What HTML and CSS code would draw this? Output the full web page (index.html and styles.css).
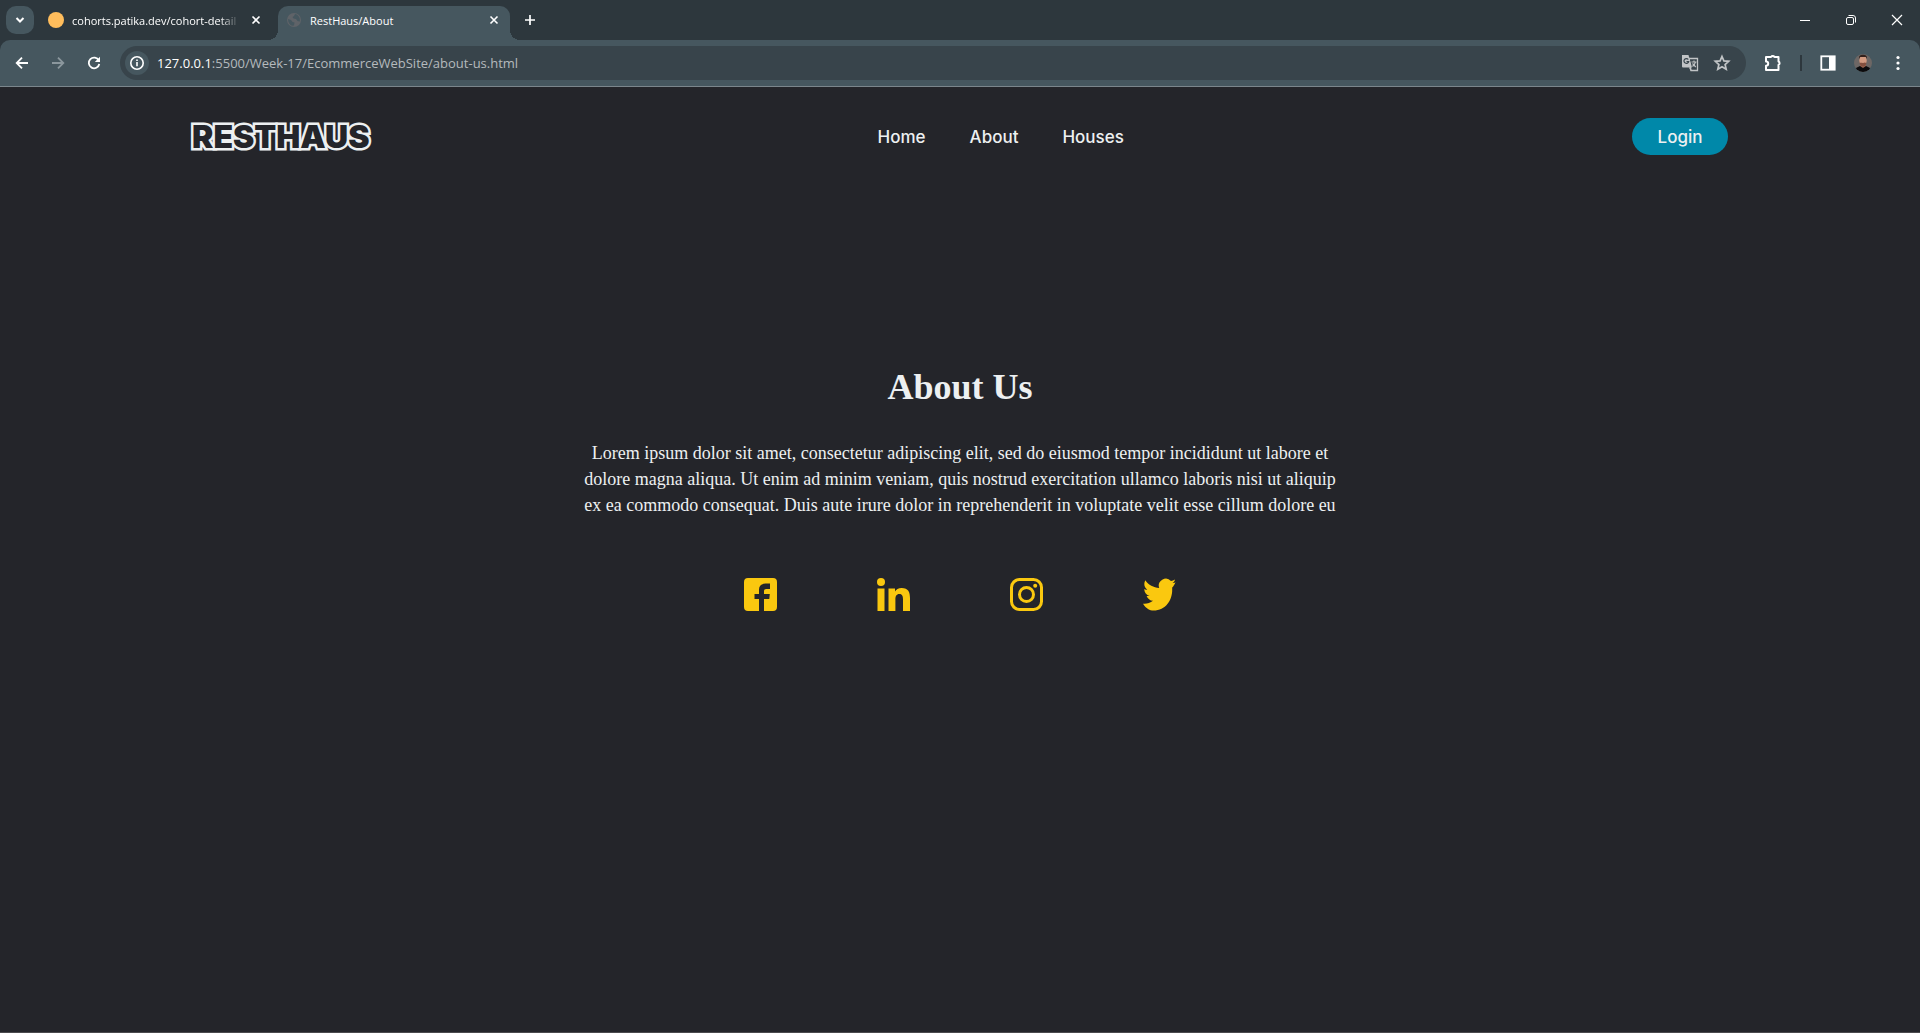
FILE: index.html
```html
<!DOCTYPE html>
<html lang="en">
<head>
<meta charset="utf-8">
<meta name="viewport" content="width=device-width, initial-scale=1">
<title>RestHaus/About</title>
<link rel="stylesheet" href="styles.css">
</head>
<body>
<div class="browser">
  <div class="tab-strip">
    <button class="tab-search" aria-label="Search tabs"><svg width="28" height="28" viewBox="0 0 28 28"><path d="M10.5 12l3.5 3.5 3.5-3.5" fill="none" stroke="#fff" stroke-width="2"/></svg></button>
    <div class="tab">
      <svg width="16" height="16" viewBox="0 0 16 16"><circle cx="8" cy="8" r="8" fill="#ffbd5c"/></svg>
      <span class="tab-title fade">cohorts.patika.dev/cohort-detail</span>
      <button class="icon-button" aria-label="Close tab"><svg width="16" height="16" viewBox="0 0 16 16"><path d="M4.500 4.500l7 7m0-7l-7 7" stroke="#fff" stroke-width="1.600"/></svg></button>
    </div>
    <div class="tab active">
      <svg width="16" height="16" viewBox="0 0 16 16"><circle cx="8" cy="8" r="7" fill="#5f6368"/><path d="M2 7l3 1 1.500 2 2 .5-.5 3-2 .3C3.500 13 2 10 2 7zM9 2L8 4 6.500 5l1 1.500L10 7l1.500 2 2.300.500C14.500 6 12.500 2.500 9 2z" fill="#46575f"/></svg>
      <span class="tab-title">RestHaus/About</span>
      <button class="icon-button" aria-label="Close tab"><svg width="16" height="16" viewBox="0 0 16 16"><path d="M4.500 4.500l7 7m0-7l-7 7" stroke="#fff" stroke-width="1.600"/></svg></button>
    </div>
    <button class="icon-button new-tab" aria-label="New tab"><svg width="16" height="16" viewBox="0 0 16 16"><path d="M8 3v10M3 8h10" stroke="#fff" stroke-width="1.700"/></svg></button>
    <div class="window-controls">
      <button class="icon-button" aria-label="Minimize"><svg width="12" height="12" viewBox="0 0 12 12"><path d="M1 6.500h10" stroke="#fff"/></svg></button>
      <button class="icon-button" aria-label="Restore"><svg width="12" height="12" viewBox="0 0 12 12" fill="none" stroke="#fff"><rect x="1.500" y="3.500" width="7" height="7" rx="1.500"/><path d="M3.500 1.500H8a2.500 2.500 0 0 1 2.500 2.500v4.500"/></svg></button>
      <button class="icon-button" aria-label="Close"><svg width="12" height="12" viewBox="0 0 12 12"><path d="M1 1l10 10m0-10L1 11" stroke="#fff" stroke-width="1.200"/></svg></button>
    </div>
  </div>
  <div class="toolbar">
    <div class="history">
      <button class="icon-button" aria-label="Back"><svg width="16" height="16" viewBox="0 0 16 16" fill="none" stroke="#fff" stroke-width="1.800"><path d="M14 8H3M8 2.700L2.700 8 8 13.300"/></svg></button>
      <button class="icon-button" aria-label="Forward"><svg width="16" height="16" viewBox="0 0 16 16" fill="none" stroke="#8b979d" stroke-width="1.800"><path d="M2 8h11M8 2.700L13.300 8 8 13.300"/></svg></button>
      <button class="icon-button" aria-label="Reload"><svg width="16" height="16" viewBox="0 0 16 16"><path d="M12.800 5.500A5.300 5.300 0 1 0 13.300 9" fill="none" stroke="#fff" stroke-width="1.800"/><path d="M14 1.800V7H8.800z" fill="#fff"/></svg></button>
    </div>
    <div class="address">
      <button class="site-info" aria-label="Site information"><svg width="16" height="16" viewBox="0 0 16 16"><circle cx="8" cy="8" r="6.200" fill="none" stroke="#fff" stroke-width="1.600"/><path d="M7.200 7h1.600v4.200H7.200zM7.200 4.600h1.600v1.500H7.200z" fill="#fff"/></svg></button>
      <label class="host" for="url">127.0.0.1</label><input class="url" id="url" type="text" value=":5500/Week-17/EcommerceWebSite/about-us.html">
      <button class="icon-button" aria-label="Translate"><svg width="18" height="18" viewBox="0 0 18 18"><path d="M8 4.500h8.500v12H10z" fill="none" stroke="#c1c4c6" stroke-width="1.300"/><path d="M1 1h6.500l3.500 12.500H2a1 1 0 0 1-1-1z" fill="#c1c4c6"/><path d="M7.300 5.500A2.400 2.400 0 1 0 7.700 7.500H5.500" fill="none" stroke="#38444b" stroke-width="1.200"/><path d="M10.500 8h5M13 6.500V8M14.500 8c-.5 2-1.500 3-3 4.500M11.500 9.500l3.300 3.500M8.500 13.500L10 16.500" fill="none" stroke="#c1c4c6" stroke-width="1.100"/></svg></button>
      <button class="icon-button" aria-label="Bookmark"><svg width="18" height="18" viewBox="0 0 18 18"><path d="M9 2.500l1.900 4.400 4.800.4-3.600 3.200 1.100 4.700L9 12.700l-4.200 2.500 1.100-4.700-3.600-3.200 4.800-.4z" fill="none" stroke="#c1c4c6" stroke-width="1.700"/></svg></button>
    </div>
    <div class="actions">
      <button class="icon-button" aria-label="Extensions"><svg width="18" height="18" viewBox="0 0 18 18"><path d="M2 3h5a2 1.800 0 0 1 3.500 0h4V7.500a1.800 1.800 0 0 1 0 3.300V16H2v-4.200a2.200 2.200 0 0 0 0-4.400z" fill="none" stroke="#fff" stroke-width="2" stroke-linejoin="round"/></svg></button>
      <span class="divider"></span>
      <button class="icon-button" aria-label="Side panel"><svg width="16" height="16" viewBox="0 0 16 16"><rect x="1.300" y="1.300" width="13.400" height="13.400" fill="none" stroke="#fff" stroke-width="1.800"/><path d="M9 1h6v14H9z" fill="#fff"/></svg></button>
      <button class="icon-button" aria-label="Profile"><svg width="18" height="18" viewBox="0 0 18 18"><defs><clipPath id="face"><circle cx="9" cy="9" r="9"/></clipPath></defs><g clip-path="url(#face)"><path d="M0 0h18v18H0z" fill="#6d6765"/><path d="M0 18v-3l6-3h6l6 3v3z" fill="#0b0b0d"/><path d="M6 9h6v3l-3 2-3-2z" fill="#9c6550"/><ellipse cx="9" cy="6.500" rx="3.700" ry="5" fill="#d39a80"/><path d="M5 5C4.500 2 6.500.800 9 .800S13.500 2 13 5l-1-2H6z" fill="#33211c"/><path d="M5.500 8.500c1.500.5 5.500.5 7 0-.3 2.500-1.800 4-3.500 4s-3.200-1.500-3.500-4z" fill="#84503f"/></g></svg></button>
      <button class="icon-button" aria-label="Menu"><svg width="16" height="16" viewBox="0 0 16 16" fill="#fff"><circle cx="8" cy="2.500" r="1.600"/><circle cx="8" cy="8" r="1.600"/><circle cx="8" cy="13.500" r="1.600"/></svg></button>
    </div>
  </div>
</div>
<header class="site-header">
  <a class="logo" href="#">RESTHAUS</a>
  <nav class="site-nav">
    <a href="#">Home</a>
    <a href="#">About</a>
    <a href="#">Houses</a>
  </nav>
  <button class="login">Login</button>
</header>
<main class="about">
  <h1>About Us</h1>
  <p>Lorem ipsum dolor sit amet, consectetur adipiscing elit, sed do eiusmod tempor incididunt ut labore et dolore magna aliqua. Ut enim ad minim veniam, quis nostrud exercitation ullamco laboris nisi ut aliquip ex ea commodo consequat. Duis aute irure dolor in reprehenderit in voluptate velit esse cillum dolore eu</p>
  <div class="social">
    <a href="#" aria-label="Facebook"><svg viewBox="0 0 33 33"><path d="M4 0h25a4 4 0 0 1 4 4v25a4 4 0 0 1-4 4h-9V21h5.300l.5-5H20v-2.500c0-1.800.8-2.500 2.300-2.500H26V5.600h-4.500c-4.500 0-6.500 2.400-6.500 6V16h-4.500v5H15v12H4a4 4 0 0 1-4-4V4a4 4 0 0 1 4-4z"/></svg></a>
    <a href="#" aria-label="LinkedIn"><svg viewBox="0 0 33 33"><circle cx="4" cy="4" r="4"/><path d="M.5 10.500h7V33h-7zM11.500 10.500H18v3c1-2 3.300-3.600 6.700-3.600 6.700 0 8.300 4.200 8.300 10V33h-7V21.500c0-2.800-.5-5.500-3.600-5.500s-4 2.400-4 5.400V33h-6.900z"/></svg></a>
    <a href="#" aria-label="Instagram"><svg viewBox="0 0 33 33"><rect x="1.500" y="1.500" width="30" height="30" rx="8" fill="none" stroke="currentColor" stroke-width="3"/><circle cx="16.500" cy="16.500" r="7" fill="none" stroke="currentColor" stroke-width="3"/><circle cx="25.200" cy="7.800" r="2"/></svg></a>
    <a href="#" aria-label="Twitter"><svg viewBox="0 0 33 33"><path d="M32.500 4.200c-1 .6-2 .8-3 .9 1.500-.9 2-1.900 2.500-3.600-1.300.7-2.700 1.200-4 1.500A7 7 0 0 0 16.200 10C10.500 9.700 5.600 7 2.300 2.300c-2 3.700-.8 7.300 2 9.500-1 0-2-.3-3-.9 0 3.500 2.300 6.200 5.300 7-1 .2-2 .2-3 .1.900 2.700 3.400 4.700 6.400 4.800-3 2.400-6.300 3.200-10 2.900 3.200 4.900 6.700 6.900 10.500 6.900C22.800 32.600 29.200 22 29.200 12V9.500c1.400-1.200 2.500-3.500 3.300-5.300z"/></svg></a>
  </div>
</main>
</body>
</html>
```
FILE: styles.css
```css
* {
  box-sizing: border-box;
}

body {
  margin: 0;
  min-height: 100vh;
  display: flex;
  flex-direction: column;
  background: #24252a;
  border-bottom: 1px solid #4b4a4e;
  color: #edf0f1;
  font-family: "Liberation Serif", serif;
}

button {
  border: 0;
  padding: 0;
  background: none;
  cursor: pointer;
}

svg {
  display: block;
  flex: none;
}

.browser {
  background: #2d373d;
  font-family: "Open Sans", sans-serif;
  border-bottom: 1px solid #7b868c;
}

.tab-strip {
  display: flex;
  height: 40px;
  padding-left: 6px;
}

.tab-search {
  width: 28px;
  height: 28px;
  margin: 6px 6px 0 0;
  border-radius: 10px;
  background: #46575f;
}

.icon-button {
  display: flex;
  align-items: center;
  justify-content: center;
}

.tab {
  position: relative;
  display: flex;
  align-items: center;
  gap: 8px;
  width: 232px;
  height: 34px;
  margin-top: 6px;
  padding: 0 8px 6px;
  color: #fff;
  font-size: 11px;
}

.tab:not(.active) {
  width: 238px;
  padding-right: 14px;
}

.active {
  background: #46575f;
  border-radius: 10px 10px 0 0;
}

.active::before,
.active::after {
  content: "";
  position: absolute;
  bottom: 0;
  width: 10px;
  height: 10px;
}

.active::before {
  right: 100%;
  background: radial-gradient(circle at 0 0, #2d373d 10px, #46575f 10px);
}

.active::after {
  left: 100%;
  background: radial-gradient(circle at 100% 0, #2d373d 10px, #46575f 10px);
}

.tab-title {
  flex: 1;
  min-width: 0;
  overflow: hidden;
  white-space: nowrap;
}

.fade {
  mask-image: linear-gradient(to right, #000 88%, transparent);
}

.new-tab {
  width: 28px;
  margin-left: 6px;
}

.window-controls {
  display: flex;
  margin-left: auto;
}

.window-controls .icon-button {
  width: 46px;
}

.toolbar {
  display: flex;
  align-items: center;
  height: 46px;
  background: #46575f;
  border-radius: 10px 10px 0 0;
}

.history {
  display: flex;
  gap: 20px;
  padding: 0 18px 0 14px;
}

.address {
  flex: 1;
  display: flex;
  align-items: center;
  height: 34px;
  padding: 0 15px 0 5px;
  border-radius: 17px;
  background: #38444b;
  font-size: 13px;
}

.address .icon-button {
  margin-left: 14px;
}

.site-info {
  display: grid;
  place-items: center;
  width: 24px;
  height: 24px;
  margin-right: 8px;
  border-radius: 50%;
  background: #46575f;
}

.host {
  color: #fff;
}

.url {
  flex: 1;
  border: 0;
  padding: 0;
  outline: 0;
  background: none;
  color: #b5babd;
  font: inherit;
}

.actions {
  display: flex;
  align-items: center;
  gap: 18px;
  padding: 0 14px 0 18px;
}

.divider {
  width: 2px;
  height: 16px;
  background: #2d373d;
}

.site-header {
  display: flex;
  align-items: center;
  justify-content: space-between;
  padding: 31px 10%;
  font-family: Inter, sans-serif;
}

.logo {
  color: #24252a;
  font-size: 32px;
  font-weight: 900;
  line-height: 36px;
  text-decoration: none;
  -webkit-text-stroke: 5px #edf0f1;
  paint-order: stroke fill;
}

.site-nav {
  display: flex;
  gap: 44px;
}

.site-nav a {
  color: #edf0f1;
  font-size: 17px;
  font-weight: 500;
  text-decoration: none;
}

.login {
  width: 96px;
  height: 37px;
  border-radius: 19px;
  background: #0088a9;
  color: #edf0f1;
  font: 500 17px Inter, sans-serif;
}

.about {
  flex: 1;
  display: flex;
  flex-direction: column;
  align-items: center;
  padding-top: 180px;
  text-align: center;
}

.about h1 {
  margin: 0 0 32px;
  font-size: 36px;
  line-height: 42px;
}

.about p {
  width: 40%;
  margin: 0 0 60px;
  font-size: 18px;
  line-height: 26px;
}

.social {
  display: flex;
  gap: 100px;
}

.social a {
  width: 33px;
  height: 33px;
  color: #fac80f;
}

.social svg {
  width: 100%;
  height: 100%;
  fill: currentColor;
}
```
